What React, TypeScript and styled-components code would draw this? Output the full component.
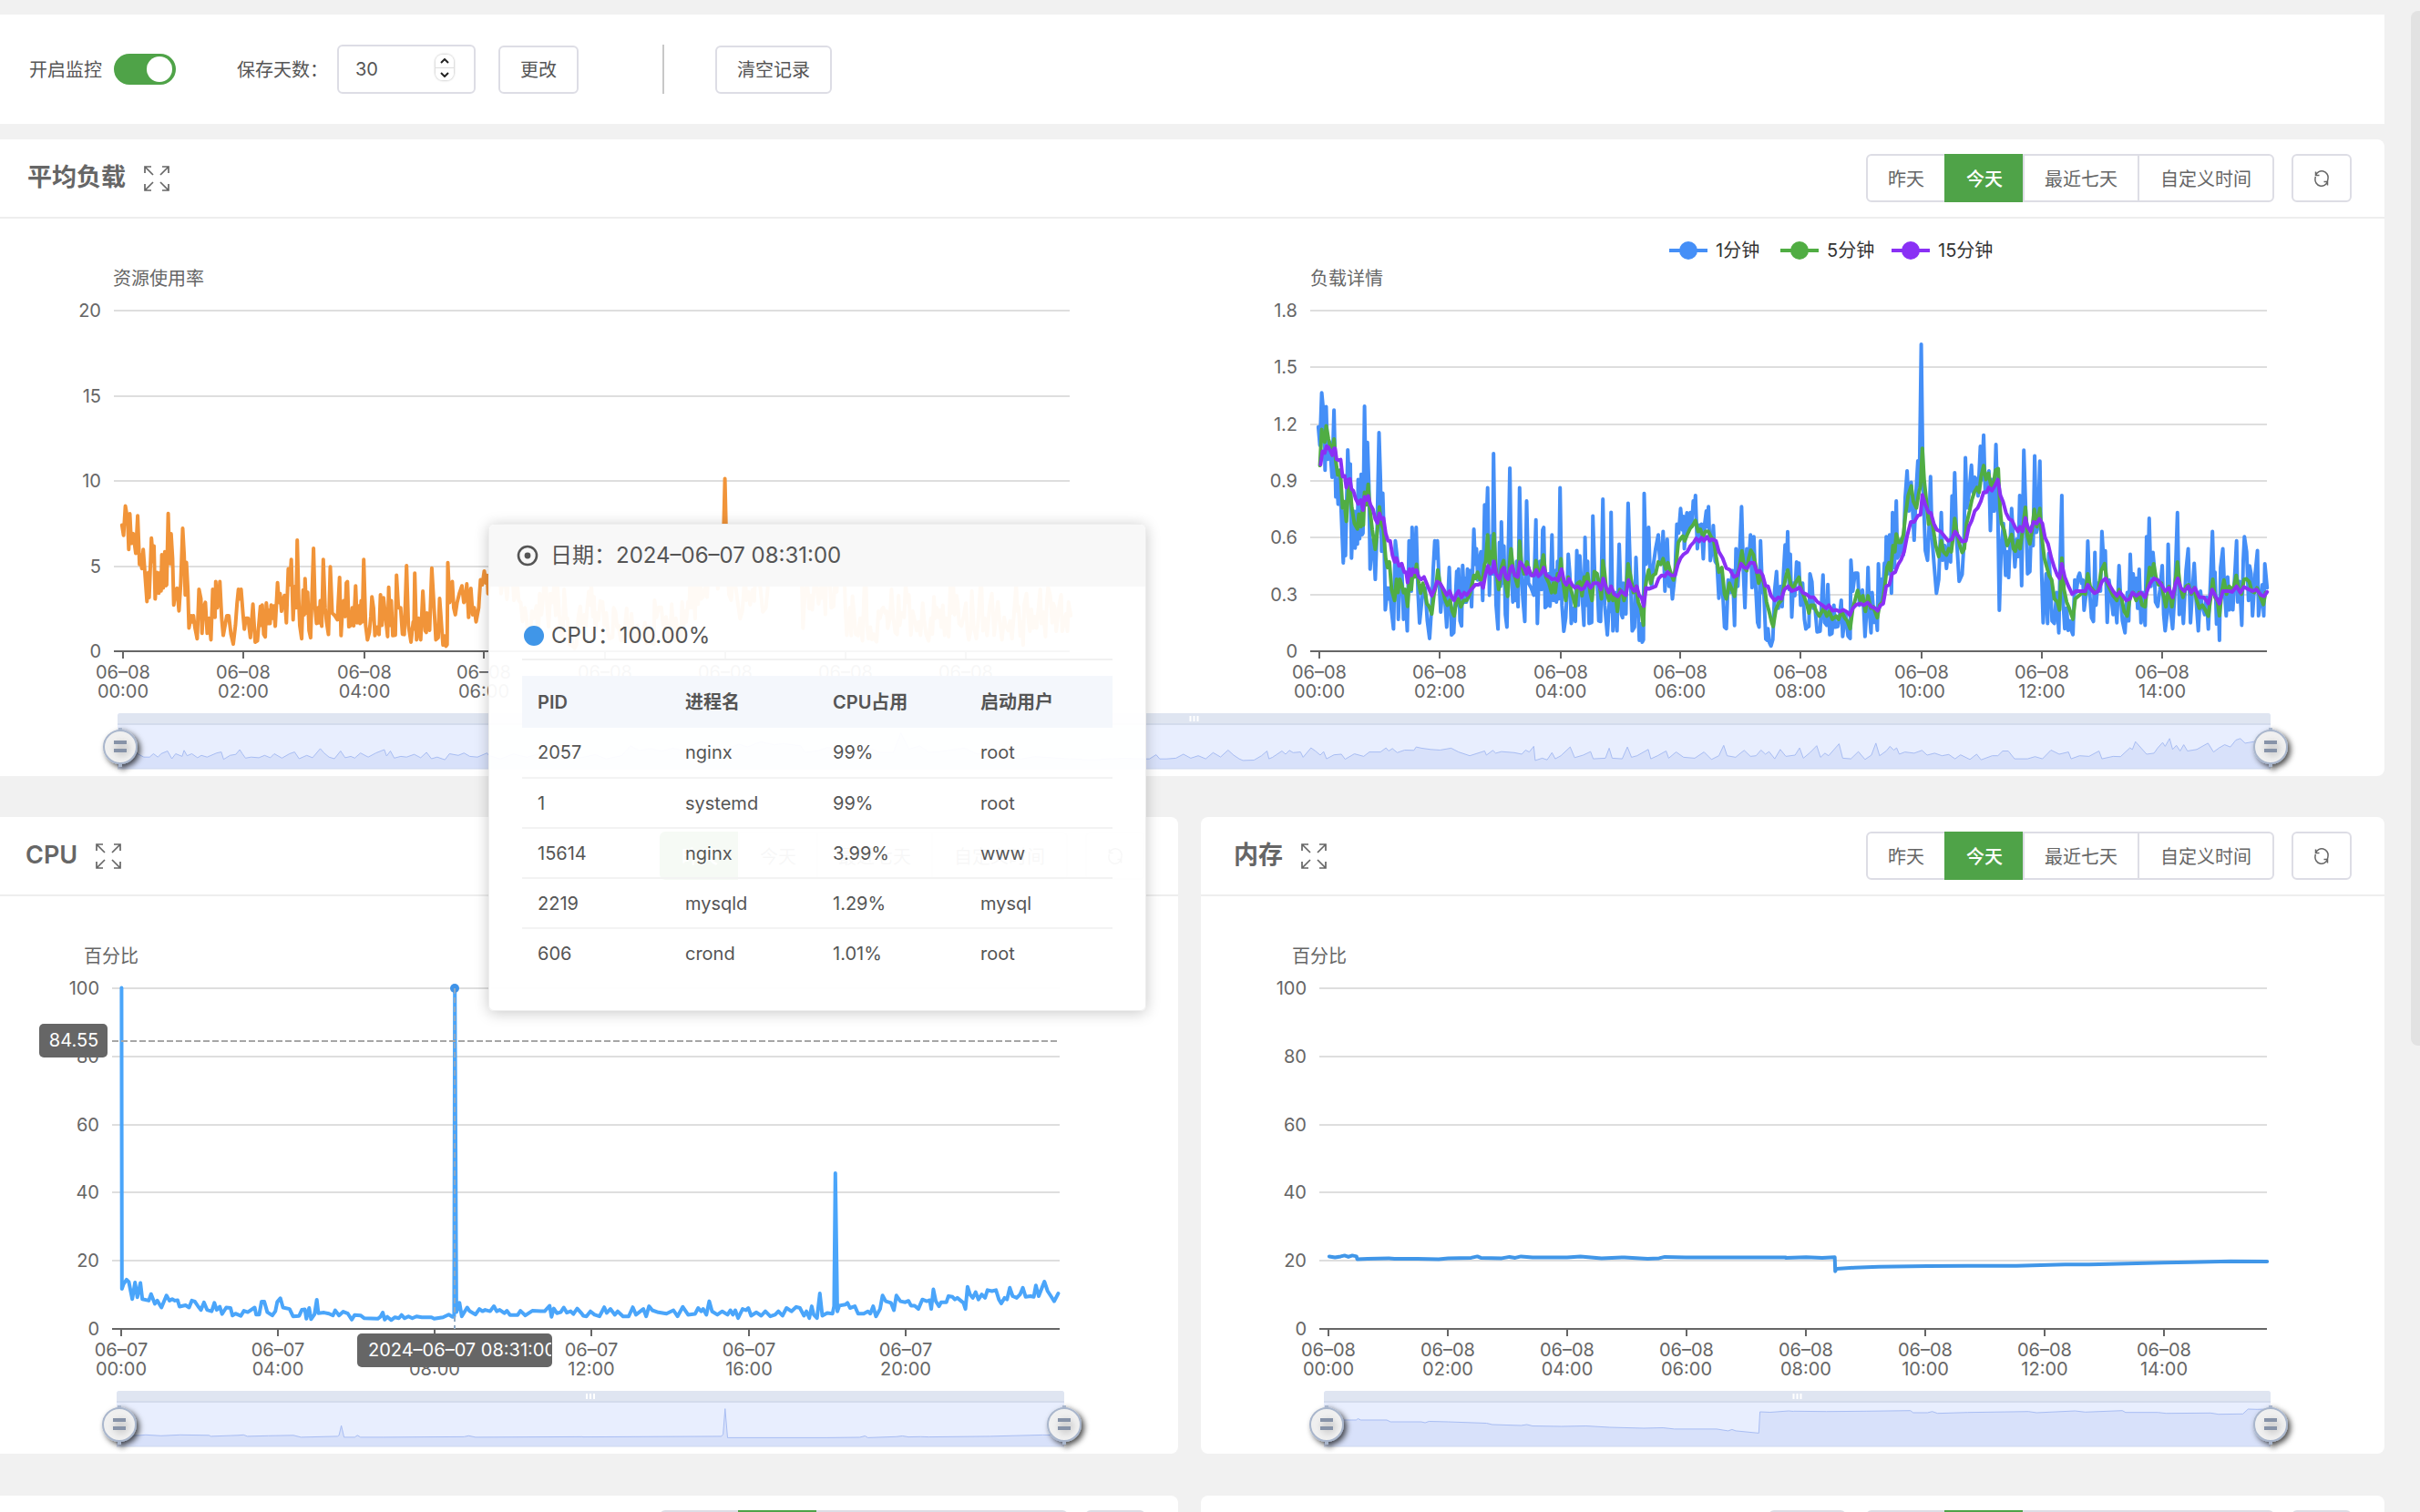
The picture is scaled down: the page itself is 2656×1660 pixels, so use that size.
import React, { useState } from "react";
import styled, { createGlobalStyle } from "styled-components";

const GlobalStyle = createGlobalStyle`
  * { box-sizing: border-box; }
  body {
    margin: 0;
    background: #f1f1f1;
    color: #555;
    overflow: hidden;
    font-family: Inter, "Noto Sans CJK SC", sans-serif;
    font-size: 20px;
    line-height: 28px;
  }
  button, input { font: inherit; color: inherit; }
`;

const Page = styled.main`
  position: relative;
  height: 100vh;
  overflow: hidden;
  padding: 16px 39px 0 0;
`;

const ScrollThumb = styled.div`
  position: absolute;
  top: 12px;
  right: 0;
  width: 10px;
  height: 1136px;
  border-radius: 8px 0 0 8px;
  background: #e2e2e2;
`;

const Toolbar = styled.section`
  display: flex;
  align-items: center;
  height: 120px;
  margin-bottom: 17px;
  padding-left: 32px;
  background: #fff;
`;

const Field = styled.div<{ $gap: number; $after: number }>`
  display: flex;
  align-items: center;
  gap: ${(p) => p.$gap}px;
  margin-right: ${(p) => p.$after}px;
  label { padding-top: 2px; }
`;

const Switch = styled.input`
  appearance: none;
  display: flex;
  align-items: center;
  width: 68px;
  height: 34px;
  margin: 0;
  padding: 0 4px;
  border-radius: 17px;
  background: #ccc;
  &::before {
    content: "";
    width: 28px;
    height: 28px;
    border-radius: 50%;
    background: #fff;
  }
  &:checked {
    justify-content: flex-end;
    background: #4fa348;
  }
`;

const NumberBox = styled.div`
  display: flex;
  align-items: center;
  width: 152px;
  height: 54px;
  padding: 0 22px 0 18px;
  border: 2px solid #dddde5;
  border-radius: 6px;
`;

const NumberInput = styled.input`
  flex: 1;
  min-width: 0;
  padding: 0;
  border: 0;
  outline: 0;
  background: transparent;
  appearance: textfield;
  &::-webkit-inner-spin-button { display: none; }
`;

const Stepper = styled.div`
  display: flex;
  flex-direction: column;
  width: 20px;
  border-radius: 8px;
  margin-bottom: 4px;
  box-shadow: 0 0 2px 1px #d5d5d5;
  overflow: hidden;
`;

const StepButton = styled.button`
  display: flex;
  align-items: center;
  justify-content: center;
  height: 14px;
  padding: 0;
  border: 0;
  background: #fff;
  & + & { border-top: 1px solid #ddd; }
`;

const Button = styled.button`
  height: 53px;
  padding: 2px 22px 0;
  border: 2px solid #dddde5;
  border-radius: 6px;
  background: #fff;
`;

const Divider = styled.div`
  width: 2px;
  height: 54px;
  margin-right: 56px;
  background: #c8c8c8;
`;

const Columns = styled.div`
  display: grid;
  grid-template-columns: minmax(0, 1293fr) minmax(0, 1299fr);
  gap: 46px 25px;
  margin-top: 45px;
`;

const Card = styled.section<{ $edge?: boolean }>`
  background: #fff;
  border-radius: ${(p) => (p.$edge ? "0 8px 8px 0" : "8px")};
`;

const CardHeader = styled.header<{ $inset: number }>`
  display: flex;
  align-items: center;
  height: 87px;
  padding: 0 36px 0 ${(p) => p.$inset}px;
  border-bottom: 2px solid #eee;
`;

const Title = styled.h2`
  margin: 0;
  padding-bottom: 2px;
  font-size: 27px;
  font-weight: 600;
  line-height: 40px;
  color: #666;
`;

const IconButton = styled.button`
  display: flex;
  margin-left: 20px;
  padding: 0;
  border: 0;
  background: transparent;
`;

const Tabs = styled.div`
  display: flex;
  margin: 0 19px 0 auto;
`;

const ExtraButton = styled(Button)`
  width: 85px;
  margin-left: auto;
  & + ${Tabs} { margin-left: 22px; }
`;

const Tab = styled.button<{ $active: boolean }>`
  height: 53px;
  padding: 2px 22px 0;
  border: 2px solid ${(p) => (p.$active ? "#4fa348" : "#dddde5")};
  background: ${(p) => (p.$active ? "#4fa348" : "#fff")};
  color: ${(p) => (p.$active ? "#fff" : "#666")};
  font-weight: ${(p) => (p.$active ? 500 : 400)};
  & + & { margin-left: -2px; }
  &:first-child { border-radius: 6px 0 0 6px; }
  &:last-child { border-radius: 0 6px 6px 0; padding: 2px 23px 0; }
`;

const RefreshButton = styled(Button)`
  display: flex;
  align-items: center;
  justify-content: center;
  width: 66px;
  padding: 0;
`;

const Chart = styled.svg`
  display: block;
  width: 100%;
  height: auto;
  text { fill: #666; font-size: 20px; dominant-baseline: central; }
  text.legend { fill: #333; }
  text.pointer { fill: #fff; }
`;

const Tooltip = styled.aside`
  position: absolute;
  left: 536px;
  top: 575px;
  width: 722px;
  height: 535px;
  border: 1px solid #eee;
  border-radius: 6px;
  background: rgba(255, 255, 255, 0.95);
  box-shadow: 0 2px 16px rgba(0, 0, 0, 0.22);
`;

const TooltipHeader = styled.div`
  display: flex;
  align-items: center;
  gap: 13px;
  height: 68px;
  padding-left: 30px;
  border-radius: 6px 6px 0 0;
  background: #f8f8f8;
  font-size: 24px;
`;

const TooltipBody = styled.div`
  padding: 37px 36px 0;
`;

const Reading = styled.div`
  display: flex;
  align-items: center;
  gap: 8px;
  height: 44px;
  padding: 0 0 8px 2px;
  margin-bottom: 17px;
  border-bottom: 2px solid #f1f1f1;
  font-size: 24px;
`;

const Dot = styled.span`
  width: 22px;
  height: 22px;
  border-radius: 50%;
  background: #4096e8;
`;

const ProcessTable = styled.table`
  width: 100%;
  table-layout: fixed;
  border-collapse: collapse;
  text-align: left;
  th {
    height: 57px;
    padding: 0 17px;
    background: #f4f7fc;
    font-weight: 600;
  }
  td {
    height: 55px;
    padding: 0 17px;
    border-bottom: 2px solid #f3f3f3;
  }
  tr:last-child td { border-bottom: 0; }
`;

type Frame = { x: number; y: number; sx: number; sy: number };
type Point = [number, number];

const read = (data: string, f: Frame): Point[] =>
  data
    .trim()
    .split(/\s+/)
    .map((pair) => {
      const [x, y] = pair.split(",").map(Number);
      return [f.x + x / f.sx, f.y + y / f.sy];
    });

const toPath = (points: Point[]) =>
  "M" + points.map(([x, y]) => `${x.toFixed(1)} ${y.toFixed(1)}`).join("L");

const LOAD_A: Frame = { x: 1360, y: 80, sx: 2.45, sy: 2.9037 };
const LOAD_B: Frame = { x: 1960, y: 80, sx: 2.45, sy: 2.9037 };
const LOAD_C: Frame = { x: 0, y: 40, sx: 2.3758, sy: 2.7034 };
const LOAD_D: Frame = { x: 520, y: 320, sx: 2.063, sy: 2.8 };
const CPU_A: Frame = { x: 0, y: -125, sx: 2.3758, sy: 1.96 };
const CPU_B: Frame = { x: 640, y: 95, sx: 2.24, sy: 2.7034 };
const MEM_A: Frame = { x: 2, y: -105, sx: 2.3758, sy: 2.0103 };
const MEM_B: Frame = { x: 642, y: 355, sx: 2.2529, sy: 3 };

const load1 = [
  ...read(
    `213,432 217,490 222,323 228,400 231,570 234,367 238,535 243,480 250,592 255,378 260,655 263,600 266,678 270,570 280,865 284,700 286,842 292,505 297,640 299,550 302,850 307,700 312,818 316,700 318,805 320,600 324,788 328,583 331,775 333,770 337,366 341,650 345,481 349,620 352,885 357,800 361,790 366,918 371,760 376,450 380,600 383,828 386,643 390,800 393,1015 399,945 402,980 405,945 409,1010 415,1076 420,795 425,850 428,1045 432,900 437,870 442,1045 447,960 452,1082 457,795 461,850 463,955 465,752 469,900 472,870 476,752 481,960 485,1057 490,1000 495,945 500,945 506,1050 512,1106 518,1000 522,880 526,795 530,850 533,795 538,930 542,1022 546,960 552,960 558,1070 565,880 571,1095 577,1088 585,892 588,1000 590,885 594,1050 598,1066 601,873 606,990 608,915 611,990 614,885 618,960 621,890 625,1005 631,758 635,870 638,820 642,920 646,855 650,830 655,985 660,680 664,770 668,626 673,968 677,780 681,900 684,517 688,850 691,1000 696,1076 700,800 703,940 705,735 709,930 712,812 716,1030 720,1070 728,563 732,900 736,990 740,900 743,985 746,860 750,1005 754,626 759,900 763,980 768,1052 773,668 778,930 785,945 792,968 798,728 802,1058 806,900 809,860 813,950 816,760 819,752 823,1008 828,1000 832,900 836,1003 841,776 845,985 850,890 853,990 856,860 859,980 863,626 868,1000 873,1083 878,1040 882,950 885,838 889,900 893,1058 899,1010 904,1052 908,826 912,1000 916,843 921,940 927,1064 930,784 934,1000 937,860 941,1058 948,1055 951,716 956,900 962,900 967,1050 972,1052 978,662 983,1000 990,1095 996,980 998,1020 1000,704 1005,1082 1010,960 1016,1082 1022,806 1028,1030 1031,1040 1033,930 1040,1028 1046,675 1052,900 1057,1082 1063,1070 1067,848 1072,1000 1076,1112 1080,1060 1084,1118 1087,1110 1089,644 1094,870 1097,830 1101,752 1105,900 1109,940 1114,870 1120,820 1127,776 1132,870 1136,855 1140,765 1145,955 1151,790 1156,940 1160,900 1165,980 1172,900 1174,830 1177,742 1182,770 1187,692 1192,760 1195,717 1197,820 1204,706 1209,760 1213,705 1217,750 1221,668 1224,700 1227,650 1232,820 1237,745 1240,770 1243,742 1248,852 1252,740 1256,700 1258,750 1262,686 1267,858 1271,830 1275,746 1280,860 1285,870 1290,978 1296,900 1300,950 1305,1070 1310,1075 1315,920 1320,960 1327,890 1332,1065 1336,820 1341,940 1345,850 1351,686 1356,900 1360,1008 1365,820 1370,870 1375,776 1379,944 1384,782 1389,940 1394,1055 1398,1070 1402,795 1407,960 1411,960 1416,1108 1420,1112 1422,1075 1426,1120 1430,1130 1435,1110 1440,950 1445,893 1450,1010 1456,940 1460,1005 1464,890 1468,808 1472,885 1475,766 1479,950 1482,838 1486,1038 1490,930 1494,970 1499,862 1503,890 1505,866 1510,1000 1515,930 1520,1045 1524,1076 1528,1070 1532,1068 1535,900 1540,925 1544,1010 1548,1000 1554,1085 1562,1083`,
    LOAD_A,
  ),
  ...read(
    `100,904 104,1055 110,1064 113,934 118,1094 124,1090 129,1000 133,1070 140,1068 144,1040 149,984 153,1100 160,1020 167,1098 173,1106 175,857 180,955 186,898 193,898 198,1000 203,960 206,952 209,1000 213,1100 218,1000 221,880 225,1025 229,1088 232,960 238,1055 241,1010 246,1080 249,868 253,1000 257,918 260,980 265,866 268,900 270,782 274,900 279,776 284,962 287,705 292,880 297,668 300,850 305,840 310,790 316,840 321,657 326,572 331,700 337,608 341,700 345,793 350,640 355,540 359,620 364,168 369,620 375,826 381,857 385,760 389,590 393,780 398,860 405,962 411,918 418,705 422,857 427,810 432,883 438,800 443,862 447,652 450,760 454,578 459,780 466,924 474,902 479,800 483,530 487,690 492,650 499,554 503,640 508,592 513,600 517,652 523,494 527,600 532,458 536,640 541,600 546,572 550,762 555,600 560,700 565,488 570,700 574,1016 579,820 585,740 591,905 595,830 599,912 607,692 612,800 616,878 621,790 625,845 629,650 634,938 640,506 645,700 650,900 656,893 660,750 665,810 669,524 674,768 678,750 683,541 688,900 692,1056 700,900 704,1058 707,835 711,920 716,1050 722,1058 728,960 734,1088 738,840 742,650 746,1000 750,1075 755,1010 759,1080 764,1050 768,1082 772,1094 777,920 781,960 786,910 790,898 795,930 799,920 802,1016 808,960 812,796 817,960 822,1040 827,1052 831,832 834,1000 839,930 846,955 850,765 855,870 859,827 864,1055 869,920 875,975 880,1030 885,980 890,1056 896,874 900,970 905,1050 912,1088 918,960 922,1050 926,838 930,960 934,900 938,955 942,915 946,1010 950,886 955,1056 960,960 966,1064 970,782 973,930 977,723 982,940 987,832 990,870 994,990 1000,1004 1006,950 1012,874 1016,1030 1020,1082 1025,1030 1028,806 1033,1000 1040,1075 1046,960 1053,705 1058,1030 1063,960 1069,1058 1076,890 1082,820 1088,1056 1093,960 1098,867 1103,980 1109,1082 1115,955 1119,1000 1126,1030 1131,975 1136,1076 1142,920 1147,765 1151,920 1154,895 1158,1060 1163,980 1166,1112 1169,880 1175,820 1180,960 1184,1034 1188,910 1193,1015 1197,950 1202,1015 1207,905 1212,795 1215,990 1220,925 1226,1064 1230,860 1233,782 1239,830 1244,985 1247,875 1251,900 1255,1034 1262,900 1268,826 1271,1034 1277,980 1281,935 1285,1034 1288,868 1294,945`,
    LOAD_B,
  ),
];

const load5 = [
  ...read(
    `217,555 222,440 226,475 230,480 234,428 240,470 246,500 250,520 255,470 260,540 265,585 272,570 278,690 283,670 288,733 294,630 298,620 303,690 310,740 318,757 322,710 327,750 331,700 334,745 337,640 342,680 347,615 352,700 358,760 366,822 372,760 377,687 382,740 388,760 394,850 399,880 404,862 410,950 418,985 423,918 427,960 432,918 438,940 442,960 447,950 453,1004 458,910 463,950 467,892 472,910 477,870 483,930 488,962 494,930 500,960 505,995 511,1005 518,1028 524,965 530,935 534,888 540,930 546,945 553,980 560,1000 567,985 573,1020 578,1034 584,990 590,980 596,1005 604,985 612,985 620,965 627,930 631,905 636,915 641,895 648,920 655,918 660,870 663,860 668,776 673,870 677,830 681,850 685,772 690,880 698,950 705,880 711,858 716,930 722,972 728,860 731,820 737,890 744,920 749,940 754,796 759,870 766,900 774,862 780,890 788,905 794,900 798,858 805,905 812,885 818,840 825,910 833,930 840,960 845,930 850,960 856,900 860,920 865,852 870,920 878,985 885,910 892,950 898,975 904,1003 910,930 916,925 922,970 928,910 933,920 937,900 944,960 949,985 955,893 962,900 968,930 974,980 978,858 983,900 988,960 994,985 1000,940 1005,985 1012,970 1017,1020 1023,950 1030,960 1035,985 1040,960 1046,868 1053,910 1060,960 1067,940 1073,990 1080,1010 1087,1064 1090,960 1096,915 1101,888 1107,930 1113,905 1120,900 1127,862 1134,870 1140,852 1147,885 1153,865 1160,895 1168,920 1175,870 1181,800 1187,788 1193,780 1198,795 1205,775 1213,755 1220,745 1227,730 1234,765 1240,758 1247,780 1254,765 1262,765 1270,785 1276,790 1283,850 1290,895 1298,880 1305,965 1310,980 1318,930 1325,950 1332,972 1338,910 1345,880 1352,827 1358,880 1365,890 1370,850 1376,825 1383,840 1390,880 1397,930 1404,900 1411,930 1418,990 1425,1020 1432,1055 1436,1068 1443,1015 1450,995 1458,985 1465,940 1470,910 1475,888 1480,915 1485,945 1492,940 1498,925 1505,911 1512,950 1520,975 1527,1000 1532,1025 1537,1000 1545,1000 1552,1020 1560,1035`,
    LOAD_A,
  ),
  ...read(
    `102,1010 110,1035 117,1020 125,1045 135,1035 142,1045 150,1020 158,1040 165,1050 173,1075 180,1010 187,980 193,953 200,985 207,970 214,1020 221,970 228,1010 235,1005 246,1040 252,1000 260,990 266,940 272,880 277,865 282,890 288,810 293,830 297,773 303,800 310,800 316,775 322,710 329,650 337,620 343,670 351,690 358,640 362,620 367,500 372,600 378,670 384,742 390,710 397,760 403,810 411,845 418,795 424,830 432,840 438,820 445,830 450,780 454,724 460,770 468,810 474,832 480,820 486,740 494,700 500,665 507,640 514,625 520,640 525,590 532,555 538,600 545,580 552,620 558,615 564,570 571,565 576,690 580,740 587,760 595,810 602,790 607,775 612,820 617,828 624,795 630,820 637,760 644,688 650,780 656,805 662,760 668,695 675,750 683,692 688,780 695,850 702,880 708,905 715,920 722,980 730,990 736,1015 742,850 748,950 755,990 762,1010 772,1045 778,980 788,970 797,960 805,965 812,900 818,940 825,950 832,960 840,955 848,890 857,868 864,930 872,950 880,970 890,985 896,950 903,980 910,1020 918,1035 926,970 934,960 942,985 950,960 958,1000 966,1005 972,940 978,880 984,905 989,868 995,910 1002,935 1010,930 1016,970 1022,1005 1030,940 1038,1005 1046,940 1053,862 1060,940 1068,975 1076,940 1083,935 1090,965 1098,945 1105,985 1112,1010 1120,1000 1128,1015 1136,1035 1142,980 1148,918 1154,975 1160,985 1166,1034 1172,960 1178,920 1185,965 1192,940 1198,950 1205,940 1211,905 1218,950 1225,965 1232,918 1238,916 1246,925 1253,955 1260,960 1267,945 1275,970 1284,998 1290,960`,
    LOAD_B,
  ),
];

const load15 = [
  ...read(
    `219,552 224,510 230,515 235,493 240,497 246,510 251,522 255,500 258,500 262,535 268,538 273,536 278,590 284,588 288,625 293,600 298,598 302,630 307,635 313,660 320,677 327,665 333,697 337,655 342,665 347,652 353,680 360,695 366,725 372,738 377,707 383,725 388,722 394,770 400,795 406,795 412,840 418,862 423,850 430,875 437,868 444,895 449,895 453,928 458,885 463,905 467,885 472,895 477,888 483,910 490,918 497,910 504,930 511,950 518,970 525,950 532,925 540,930 550,950 558,968 566,955 572,975 578,985 584,965 590,955 598,975 605,960 612,968 620,955 628,945 635,935 643,935 650,930 656,945 662,905 669,875 675,900 681,895 685,860 691,900 700,918 706,890 712,880 717,910 723,918 729,885 734,875 741,905 749,910 755,862 761,870 768,885 773,900 778,880 785,905 793,905 799,888 805,908 812,900 819,880 826,905 834,910 842,918 850,915 857,922 862,900 867,885 874,925 880,935 887,916 895,935 903,945 910,940 920,950 928,945 936,927 945,945 953,930 965,930 973,950 979,915 987,945 994,960 1000,940 1008,965 1018,972 1027,955 1040,968 1047,920 1055,945 1063,955 1069,940 1076,970 1082,975 1088,1003 1094,945 1102,948 1110,945 1120,940 1128,915 1136,905 1144,908 1152,895 1162,905 1172,905 1180,870 1187,850 1195,838 1205,830 1214,810 1222,800 1229,787 1237,797 1243,785 1250,795 1258,782 1265,795 1272,790 1282,795 1290,830 1300,850 1310,882 1320,888 1330,910 1340,905 1350,868 1358,880 1366,882 1374,865 1384,865 1392,895 1400,890 1408,905 1415,938 1422,940 1430,970 1440,985 1450,975 1458,980 1466,950 1476,940 1486,955 1498,950 1507,943 1515,960 1525,965 1535,975 1545,975 1555,990`,
    LOAD_A,
  ),
  ...read(
    `98,1000 108,1010 116,1000 125,1018 135,1015 145,1020 155,1015 165,1022 172,1032 180,1010 190,998 200,995 210,1000 220,992 230,1005 240,1010 247,1018 255,1000 262,995 270,940 278,935 286,900 294,895 302,870 310,855 318,830 326,780 336,735 345,735 355,715 362,712 367,648 375,680 384,705 390,706 398,740 406,760 416,765 426,780 436,795 446,790 455,765 464,780 474,797 484,795 492,750 500,730 508,700 516,690 524,670 532,640 540,640 546,625 554,635 562,620 570,600 577,650 584,670 592,705 600,725 608,730 616,750 624,765 630,750 636,765 644,722 650,750 658,765 666,735 674,740 682,725 690,740 697,785 705,805 714,850 722,880 730,905 736,915 742,868 750,910 760,940 770,965 780,955 795,955 805,955 812,935 820,950 830,962 840,955 850,925 860,915 870,935 880,955 890,970 898,958 906,970 915,985 925,980 932,960 942,970 955,960 966,975 973,950 980,930 990,915 1000,920 1010,935 1020,955 1030,945 1040,975 1048,930 1054,915 1062,945 1072,955 1082,940 1090,960 1100,945 1112,975 1124,975 1136,995 1146,950 1155,970 1166,995 1175,955 1190,955 1200,958 1212,940 1222,960 1232,942 1245,950 1255,955 1266,950 1278,968 1286,972 1294,958`,
    LOAD_B,
  ),
];

/* Resource usage follows the one-minute load divided by the core count. */
const BASE = 475;
const usage = load1.map(([x, y]): Point => [x - 1313, BASE - (BASE - y) * 0.562]);

const loadOverview = [
  ...read(
    `306,1487 355,1478 375,1490 390,1490 400,1480 412,1490 420,1480 437,1472 448,1495 458,1480 475,1488 480,1470 488,1486 500,1480 515,1492 525,1485 540,1490 565,1478 577,1475 583,1497 600,1485 615,1482 625,1468 632,1480 640,1493 655,1490 675,1492 690,1485 705,1492 715,1480 735,1493 755,1480 768,1475 780,1495 800,1485 815,1492 835,1465 845,1478 858,1490 872,1495 888,1472 900,1492 915,1488 925,1493 940,1478 960,1490 980,1478 1002,1468 1008,1487 1018,1472 1028,1493 1045,1488 1060,1490 1080,1482 1097,1492 1112,1476 1125,1495 1140,1490 1160,1498 1172,1480 1195,1485 1210,1478 1225,1488 1245,1490 1270,1478`,
    LOAD_C,
  ),
  ...read(
    `34,755 60,765 90,750 120,760 160,745 190,750 225,740 240,762 275,752 300,765 335,755 355,725 375,740 400,733 425,742 450,732 475,740 500,748 520,735 560,745 600,720 620,728 650,712 680,722 700,718 740,725 750,745 780,740 800,730 850,738 890,730 920,745 950,745 967,685 985,735 1010,725 1030,745 1060,742 1110,732 1140,750 1170,745 1200,760 1240,765 1270,758 1350,765 1400,768 1470,763 1520,765 1530,765 1545,752 1553,765 1568,765`,
    LOAD_D,
  ),
  ...read(
    `-170,1488 -150,1475 -130,1488 -110,1480 -90,1490 -70,1470 -50,1484 -30,1462 -15,1478 0,1490 10,1495 40,1494 60,1480 75,1465 80,1490 90,1485 115,1465 125,1475 135,1463 145,1470 165,1468 172,1485 193,1455 205,1465 218,1478 227,1467 235,1490 255,1477 275,1475 285,1491 310,1474 335,1482 350,1468 380,1468 395,1455 402,1465 412,1457 425,1470 445,1462 470,1463 476,1452 490,1456 515,1460 540,1462 570,1456 590,1468 620,1480 660,1465 665,1478 682,1463 690,1472 705,1467 740,1470 760,1475 770,1462 780,1468 792,1450 796,1495 815,1488 828,1493 841,1470 850,1490 865,1480 890,1452 902,1486 925,1478 945,1467 952,1490 985,1488 995,1456 1003,1488 1030,1490 1044,1452 1055,1485 1070,1480 1100,1460 1107,1490 1125,1480 1148,1465 1155,1488 1175,1468 1195,1485 1225,1488 1250,1468 1270,1492 1290,1480 1303,1447 1312,1480 1335,1485 1348,1472 1358,1463 1375,1482 1390,1480 1403,1462 1415,1475 1425,1467 1440,1490 1455,1460 1470,1482`,
    LOAD_A,
  ),
  ...read(
    `25,1478 37,1455 47,1488 65,1470 83,1448 93,1485 105,1472 115,1480 143,1442 153,1488 175,1490 195,1467 213,1492 230,1478 242,1440 252,1480 270,1465 280,1450 290,1462 298,1455 305,1475 320,1468 345,1472 366,1463 380,1478 400,1472 420,1480 438,1476 455,1490 470,1477 495,1492 513,1475 525,1493 555,1480 570,1480 583,1465 598,1465 615,1490 650,1490 670,1483 690,1490 713,1462 735,1475 760,1468 767,1490 790,1480 815,1482 842,1465 850,1490 880,1482 900,1483 925,1455 932,1460 940,1435 955,1455 970,1475 990,1472 1000,1455 1013,1438 1020,1450 1032,1425 1040,1460 1050,1447 1060,1465 1070,1445 1080,1465 1105,1460 1135,1440 1150,1468 1165,1455 1180,1445 1195,1452 1210,1430 1222,1425 1235,1440 1260,1435 1303,1435`,
    LOAD_B,
  ),
];

const cpu = [
  ...read(
    `317,442 318,1090 322,1080 330,1070 336,1075 345,1112 352,1076 358,1108 366,1077 371,1112 388,1115 394,1101 404,1122 410,1115 421,1130 434,1104 442,1115 449,1112 456,1115 463,1114 468,1128 484,1125 493,1130 500,1115 508,1117 517,1128 524,1135 532,1119 540,1135 552,1138 559,1120 565,1135 573,1128 579,1144 590,1130 601,1131 606,1147 614,1143 628,1148 636,1137 646,1140 664,1130 668,1145 676,1145 682,1117 689,1117 697,1140 710,1147 718,1138 723,1118 731,1110 738,1130 755,1133 764,1149 780,1148 787,1135 795,1134 799,1154 806,1131 811,1155 820,1145 826,1113 830,1142 845,1141 858,1143 868,1147 874,1136 884,1147 895,1139 907,1143 917,1156 925,1146 940,1147 950,1153 985,1154 992,1150 998,1141 1003,1156 1010,1150 1020,1157 1030,1151 1040,1153 1047,1146 1055,1153 1065,1149 1075,1153 1086,1149 1100,1151 1125,1151 1132,1154 1155,1151 1170,1145 1180,1150 1184,1150 1186,442 1190,1140 1198,1120 1204,1149 1218,1130 1225,1138 1240,1145 1250,1133 1258,1138 1265,1135 1278,1138 1288,1127 1295,1138 1303,1135 1315,1142 1322,1137 1330,1146 1350,1146 1357,1137 1370,1147 1388,1137 1410,1138 1420,1138 1433,1126 1438,1150 1444,1132 1452,1142 1462,1140 1470,1130 1478,1141 1488,1138 1495,1144 1505,1132 1518,1144`,
    CPU_A,
  ),
  ...read(
    `0,988 8,990 18,975 28,985 40,990 52,963 58,980 67,968 78,985 85,975 98,990 112,990 122,963 130,985 148,968 155,990 162,960 170,972 185,978 205,982 222,972 232,990 245,962 258,985 275,983 283,965 290,975 295,968 303,985 310,945 317,975 330,985 342,975 355,985 362,972 368,985 374,972 381,995 392,968 400,972 406,965 413,988 426,978 438,988 448,975 460,990 472,985 480,975 490,988 500,965 512,975 524,962 533,965 543,988 549,975 556,995 562,960 567,985 575,995 582,922 588,988 600,980 613,982 617,960 620,565 625,975 630,958 645,955 650,950 656,965 668,960 676,982 690,982 700,975 706,982 713,960 720,990 730,968 736,928 744,945 757,950 764,972 770,928 780,945 792,948 800,944 806,958 815,958 824,968 834,940 845,945 852,942 856,968 861,910 867,945 875,960 880,948 893,948 898,930 908,932 914,940 920,935 930,945 935,950 940,968 945,902 951,925 958,935 965,918 972,940 980,925 988,935 994,912 1005,915 1015,912 1022,940 1028,952 1036,935 1042,940 1049,905 1056,930 1066,935 1074,925 1081,905 1088,932 1100,930 1108,932 1113,898 1120,930 1128,905 1134,887 1142,915 1150,930 1158,945 1168,922`,
    CPU_B,
  ),
];

const cpuOverview = [
  ...read(
    `303,1407 365,1405 380,1404 420,1406 470,1404 545,1405 550,1407 620,1405 635,1404 645,1407 700,1406 765,1405 785,1409 880,1407 884,1405 890,1384 897,1409 925,1409 932,1405 940,1409 1000,1409 1210,1408 1222,1406 1240,1409 1518,1408`,
    CPU_A,
  ),
  ...read(
    `0,1348 340,1346 344,1340 349,1264 355,1350 600,1350 680,1349 693,1345 700,1350 770,1347 785,1345 800,1348 830,1347 850,1348 1000,1346 1130,1342 1182,1343`,
    CPU_B,
  ),
];

const memory = [
  ...read(
    `330,1006 345,1008 360,1006 370,1004 380,1007 390,1004 401,1006 403,1012 430,1011 485,1010 500,1011 560,1011 615,1012 640,1010 700,1009 716,1006 725,1009 780,1010 800,1007 815,1009 830,1006 860,1008 950,1008 985,1006 1040,1010 1100,1008 1160,1011 1190,1010 1205,1007 1260,1008 1400,1008 1520,1008`,
    MEM_A,
  ),
  ...read(
    `0,126 50,124 90,126 121,124 122,170 125,162 170,158 230,155 350,153 450,152 570,152 690,148 750,148 800,146 935,142 1000,140 1100,137 1190,138`,
    MEM_B,
  ),
];

const memoryOverview = [
  ...read(
    `316,1367 400,1367 405,1364 412,1367 480,1367 490,1371 570,1371 580,1373 590,1370 640,1371 740,1374 755,1377 830,1379 845,1377 860,1380 935,1381 1000,1380 1060,1383 1150,1385 1200,1384 1230,1387 1340,1387 1370,1391 1380,1388 1390,1391 1450,1396 1453,1349 1480,1350 1528,1347 1540,1348`,
    MEM_A,
  ),
  ...read(
    `20,631 100,632 200,631 308,629 315,636 350,636 362,632 375,638 450,635 600,632 620,636 715,630 740,634 832,629 840,635 920,635 940,638 1050,637 1070,641 1130,640 1143,624 1165,625 1200,624`,
    MEM_B,
  ),
];

type AxisProps = {
  name: string;
  nameX: number;
  left: number;
  right: number;
  values: string[];
  ticks: number[];
  times: string[];
  day: string;
};

function Axes({ name, nameX, left, right, values, ticks, times, day }: AxisProps) {
  const top = 101;
  const nameY = 66;
  const step = (BASE - top) / (values.length - 1);
  return (
    <g>
      <text x={nameX} y={nameY}>{name}</text>
      {values.map((v, i) => {
        const y = Math.round(top + i * step);
        const last = i === values.length - 1;
        return (
          <g key={v}>
            <path d={`M${left} ${y}H${right}`} stroke={last ? "#666" : "#dedede"} strokeWidth={2} />
            <text x={left - 14} y={y} textAnchor="end">{v}</text>
          </g>
        );
      })}
      {ticks.map((x, i) => (
        <g key={x}>
          <path d={`M${x} ${BASE}v8`} stroke="#666" strokeWidth={2} />
          <text x={x} y={498} textAnchor="middle">{day}</text>
          <text x={x} y={519} textAnchor="middle">{times[i]}</text>
        </g>
      ))}
    </g>
  );
}

function Handle({ x }: { x: number }) {
  return (
    <g filter="url(#handle-shadow)" stroke="#a9b6cc" strokeWidth={2}>
      <path d={`M${x} 559v6M${x} 596v6`} strokeWidth={4} />
      <circle cx={x} cy={580} r={18} fill="#f0f0f0" />
      <circle cx={x + 2} cy={582} r={9} fill="#d4d4d4" stroke="none" filter="url(#handle-core)" />
      <path d={`M${x - 7} 575h14M${x - 7} 584h14`} stroke="#8793a8" strokeWidth={4} />
    </g>
  );
}

function ZoomSlider({ left, right, data }: { left: number; right: number; data: Point[] }) {
  const line = toPath(data);
  const mid = (left + right) / 2;
  return (
    <g>
      <defs>
        <filter id="handle-shadow" x="-50%" y="-50%" width="220%" height="220%">
          <feDropShadow dx="3" dy="3" stdDeviation="3" floodColor="#000" floodOpacity="0.7" />
        </filter>
        <filter id="handle-core" x="-50%" y="-50%" width="200%" height="200%">
          <feGaussianBlur stdDeviation="3" />
        </filter>
      </defs>
      <rect x={left} y={543} width={right - left} height={61} rx={3} fill="#e8eefe" />
      <path d={`M${left} 556v-10q0 -3 3 -3H${right - 3}q3 0 3 3v10z`} fill="#dfe5f1" />
      <path d={`M${left} 555H${right}`} stroke="#d3dbec" strokeWidth={2} />
      <path d={`${line}L${right} 604L${left} 604Z`} fill="#d8e1fa" />
      <path d={`M${left} 604H${right}`} stroke="#cfd9ef" strokeWidth={1} />
      <path d={line} fill="none" stroke="#a8bdf3" strokeWidth={1} />
      <path d={`M${mid - 4} 546v6M${mid} 546v6M${mid + 4} 546v6`} stroke="#fff" strokeWidth={2} />
      <Handle x={left + 3} />
      <Handle x={right} />
    </g>
  );
}

function Series({ data, color }: { data: Point[]; color: string }) {
  return (
    <path d={toPath(data)} fill="none" stroke={color} strokeWidth={4} strokeLinejoin="round" strokeLinecap="round" />
  );
}

const HOURS = ["00:00", "02:00", "04:00", "06:00", "08:00", "10:00", "12:00", "14:00"];
const PERCENT = ["100", "80", "60", "40", "20", "0"];

const LEGEND = [
  { x: 1832, color: "#458ff7", label: "1分钟" },
  { x: 1954, color: "#50ad43", label: "5分钟" },
  { x: 2076, color: "#8a30f5", label: "15分钟" },
];

function LoadChart() {
  return (
    <Chart viewBox="0 0 2617 612" role="img" aria-label="平均负载">
      <Axes
        name="资源使用率" nameX={124} left={125} right={1174} day="06–08" times={HOURS}
        values={["20", "15", "10", "5", "0"]}
        ticks={[135, 267, 400, 531, 664, 796, 928, 1060]}
      />
      <Series data={usage} color="#f19439" />
      {LEGEND.map((item) => (
        <g key={item.label}>
          <path d={`M${item.x} 35h42`} stroke={item.color} strokeWidth={4} />
          <circle cx={item.x + 21} cy={35} r={10} fill={item.color} />
          <text className="legend" x={item.x + 51} y={35}>{item.label}</text>
        </g>
      ))}
      <Axes
        name="负载详情" nameX={1438} left={1438} right={2488} day="06–08" times={HOURS}
        values={["1.8", "1.5", "1.2", "0.9", "0.6", "0.3", "0"]}
        ticks={[1448, 1580, 1713, 1844, 1976, 2109, 2241, 2373]}
      />
      <Series data={load1} color="#458ff7" />
      <Series data={load5} color="#50ad43" />
      <Series data={load15} color="#8a30f5" />
      <ZoomSlider left={129} right={2492} data={loadOverview} />
    </Chart>
  );
}

function CpuChart() {
  return (
    <Chart viewBox="0 0 1293 612" role="img" aria-label="CPU">
      <defs>
        <clipPath id="time-label"><rect x={392} y={479} width={213} height={37} rx={5} /></clipPath>
      </defs>
      <Axes
        name="百分比" nameX={92} left={123} right={1163} day="06–07"
        times={["00:00", "04:00", "08:00", "12:00", "16:00", "20:00"]}
        values={PERCENT} ticks={[133, 305, 477, 649, 822, 994]}
      />
      <Series data={cpu} color="#4aa5fa" />
      <circle cx={499} cy={101} r={5} fill="#3f93e8" />
      <path d="M499 101V475" stroke="#8fa9c4" strokeWidth={2} strokeDasharray="6 4" />
      <path d="M123 159H1163" stroke="#a6a6a6" strokeWidth={2} strokeDasharray="7 3" />
      <rect x={43} y={140} width={75} height={37} rx={5} fill="#666" />
      <text className="pointer" x={81} y={158} textAnchor="middle">84.55</text>
      <rect x={392} y={480} width={214} height={37} rx={5} fill="#666" />
      <text className="pointer" x={404} y={498} clipPath="url(#time-label)">2024–06–07 08:31:00</text>
      <ZoomSlider left={128} right={1168} data={cpuOverview} />
    </Chart>
  );
}

function MemoryChart() {
  return (
    <Chart viewBox="0 0 1299 612" role="img" aria-label="内存">
      <Axes
        name="百分比" nameX={100} left={130} right={1170} day="06–08" times={HOURS}
        values={PERCENT} ticks={[140, 271, 402, 533, 664, 795, 926, 1057]}
      />
      <Series data={memory} color="#4096e8" />
      <ZoomSlider left={135} right={1174} data={memoryOverview} />
    </Chart>
  );
}

function ExpandIcon() {
  return (
    <svg width="28" height="28" viewBox="0 0 28 28" fill="none" stroke="#666" strokeWidth="1.7" aria-hidden="true">
      <path d="M1 8V1h7M1 1l9 9M20 1h7v7M27 1l-9 9M1 20v7h7M1 27l9-9M27 20v7h-7M27 27l-9-9" />
    </svg>
  );
}

function RefreshIcon() {
  return (
    <svg width="18" height="18" viewBox="0 0 18 18" fill="none" stroke="#666" strokeWidth="1.5" aria-hidden="true">
      <path d="M2.500 1.500v4h4M2.500 5.500A7 7 0 0 1 16 9c0 1.400-.4 2.600-1 3.600M15.500 16.500v-4h-4M15.500 12.500A7 7 0 0 1 2 9c0-.8.1-1.300.3-2" />
    </svg>
  );
}

const RANGES = ["昨天", "今天", "最近七天", "自定义时间"];

function RangePicker({ initial }: { initial: number }) {
  const [active, setActive] = useState(initial);
  return (
    <>
      <Tabs>
        {RANGES.map((label, i) => (
          <Tab key={label} type="button" $active={i === active} onClick={() => setActive(i)}>{label}</Tab>
        ))}
      </Tabs>
      <RefreshButton type="button" aria-label="刷新"><RefreshIcon /></RefreshButton>
    </>
  );
}

type PanelProps = {
  title?: string;
  inset: number;
  edge?: boolean;
  initial?: number;
  extra?: boolean;
  children?: React.ReactNode;
};

function Panel({ title, inset, edge, initial = 1, extra, children }: PanelProps) {
  return (
    <Card $edge={edge}>
      <CardHeader $inset={inset}>
        {title && <Title>{title}</Title>}
        {title && <IconButton type="button" aria-label="全屏"><ExpandIcon /></IconButton>}
        {extra && <ExtraButton type="button" aria-label="单位" />}
        <RangePicker initial={initial} />
      </CardHeader>
      {children}
    </Card>
  );
}

const PROCESSES = [
  ["2057", "nginx", "99%", "root"],
  ["1", "systemd", "99%", "root"],
  ["15614", "nginx", "3.99%", "www"],
  ["2219", "mysqld", "1.29%", "mysql"],
  ["606", "crond", "1.01%", "root"],
];

function CpuTooltip() {
  return (
    <Tooltip>
      <TooltipHeader>
        <svg width="24" height="24" viewBox="0 0 24 24" fill="none" aria-hidden="true">
          <circle cx="12" cy="12" r="10" stroke="#555" strokeWidth="2.600" />
          <circle cx="12" cy="12" r="3.400" fill="#555" />
        </svg>
        <span>日期：2024–06–07 08:31:00</span>
      </TooltipHeader>
      <TooltipBody>
        <Reading><Dot /><span>CPU：100.00%</span></Reading>
        <ProcessTable>
          <thead>
            <tr><th>PID</th><th>进程名</th><th>CPU占用</th><th>启动用户</th></tr>
          </thead>
          <tbody>
            {PROCESSES.map((row) => (
              <tr key={row[0]}>{row.map((cell, i) => <td key={i}>{cell}</td>)}</tr>
            ))}
          </tbody>
        </ProcessTable>
      </TooltipBody>
    </Tooltip>
  );
}

export default function App() {
  const [enabled, setEnabled] = useState(true);
  const [days, setDays] = useState(30);
  return (
    <Page>
      <GlobalStyle />
      <Toolbar>
        <Field $gap={13} $after={67}>
          <label htmlFor="monitor">开启监控</label>
          <Switch id="monitor" type="checkbox" role="switch" checked={enabled} onChange={(e) => setEnabled(e.target.checked)} />
        </Field>
        <Field $gap={10} $after={25}>
          <label htmlFor="days">保存天数：</label>
          <NumberBox>
            <NumberInput id="days" type="number" value={days} onChange={(e) => setDays(Number(e.target.value))} />
            <Stepper>
              <StepButton type="button" aria-label="增加" onClick={() => setDays(days + 1)}>
                <svg width="10" height="6" viewBox="0 0 10 6" fill="none" stroke="#222" strokeWidth="2"><path d="M1 5l4-4 4 4" /></svg>
              </StepButton>
              <StepButton type="button" aria-label="减少" onClick={() => setDays(days - 1)}>
                <svg width="10" height="6" viewBox="0 0 10 6" fill="none" stroke="#222" strokeWidth="2"><path d="M1 1l4 4 4-4" /></svg>
              </StepButton>
            </Stepper>
          </NumberBox>
        </Field>
        <Field $gap={0} $after={92}><Button type="button">更改</Button></Field>
        <Divider />
        <Button type="button">清空记录</Button>
      </Toolbar>
      <Panel title="平均负载" inset={30} edge><LoadChart /></Panel>
      <Columns>
        <Panel title="CPU" inset={28} edge initial={0}><CpuChart /></Panel>
        <Panel title="内存" inset={36}><MemoryChart /></Panel>
        <Panel inset={30} edge />
        <Panel inset={36} extra />
      </Columns>
      <CpuTooltip />
      <ScrollThumb />
    </Page>
  );
}
